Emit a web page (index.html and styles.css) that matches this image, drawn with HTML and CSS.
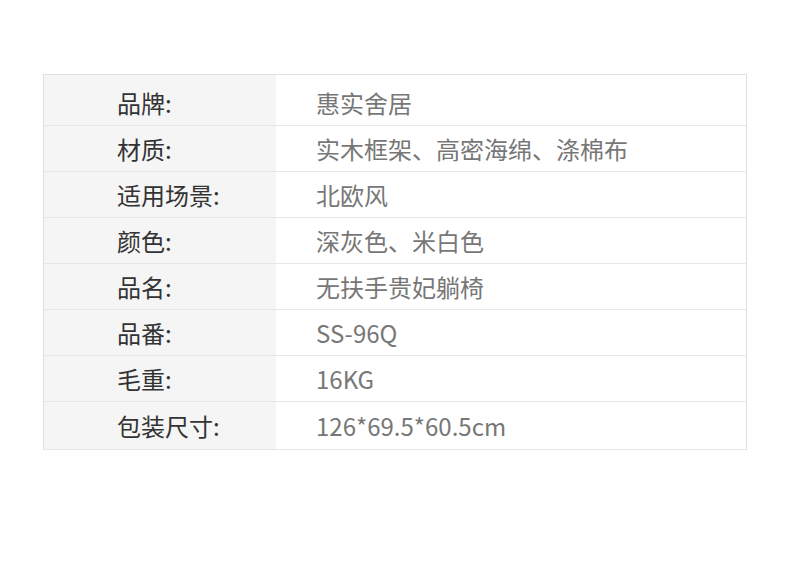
FILE: index.html
```html
<!DOCTYPE html>
<html lang="zh-CN">
<head>
  <meta charset="UTF-8" />
  <meta name="viewport" content="width=device-width, initial-scale=1.0"/>
  <title>产品参数</title>
  <link rel="stylesheet" href="styles.css">
</head>
<body>
  <div class="page">
    <table class="spec-table">
      <tbody>
        <tr><th>品牌:</th><td>惠实舍居</td></tr>
        <tr><th>材质:</th><td>实木框架、高密海绵、涤棉布</td></tr>
        <tr><th>适用场景:</th><td>北欧风</td></tr>
        <tr><th>颜色:</th><td>深灰色、米白色</td></tr>
        <tr><th>品名:</th><td>无扶手贵妃躺椅</td></tr>
        <tr><th>品番:</th><td>SS-96Q</td></tr>
        <tr><th>毛重:</th><td>16KG</td></tr>
        <tr><th>包装尺寸:</th><td>126*69.5*60.5cm</td></tr>
      </tbody>
    </table>
  </div>
</body>
</html>
```

FILE: styles.css
```css
body {
  margin: 0;
  background-color: #fff;
  font-family: "Noto Sans CJK SC", "Noto Sans", sans-serif;
}
.page {
  padding: 74px 0 0 43px;
}
.spec-table {
  width: 704px;
  border-collapse: collapse;
  border: 1px solid #e0e0e0;
}
.spec-table th,
.spec-table td {
  height: 44px;
  padding: 1px 0 0;
  border-bottom: 1px solid #e6e6e6;
  font-size: 24px;
  font-weight: normal;
  line-height: 30px;
  text-align: left;
  vertical-align: middle;
  white-space: nowrap;
}
.spec-table th {
  width: 159px;
  padding-left: 73px;
  background-color: #f5f5f5;
  color: #333;
}
.spec-table td {
  padding-left: 40px;
  color: #777;
}
.spec-table tr:first-child th,
.spec-table tr:first-child td {
  height: 45px;
  padding-top: 5px;
}
.spec-table tr:last-child th,
.spec-table tr:last-child td {
  height: 46px;
}
```
